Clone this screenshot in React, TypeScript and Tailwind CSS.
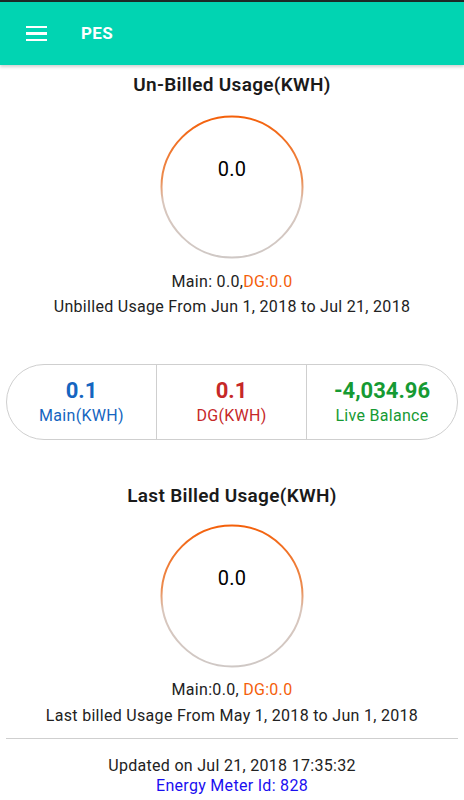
import { useId } from 'react';

const font = { fontFamily: 'Roboto, "Noto Sans", sans-serif' };

function Ring({ value }: { value: string }) {
  const id = useId().replace(/:/g, '');
  return (
    <div className="relative w-[144px] h-[144px] mx-auto">
      <svg width="144" height="144" viewBox="0 0 144 144" className="absolute inset-0">
        <defs>
          <linearGradient id={`g${id}`} x1="0" y1="0" x2="0" y2="1">
            <stop offset="0" stopColor="#f4600a" />
            <stop offset="0.45" stopColor="#ec8c50" />
            <stop offset="0.6" stopColor="#d9c6bc" />
            <stop offset="1" stopColor="#cfc8c5" />
          </linearGradient>
        </defs>
        <circle cx="72" cy="72" r="70.5" fill="none" stroke={`url(#g${id})`} strokeWidth="2" />
      </svg>
      <div className="relative pt-[42px] text-center text-[20px] leading-6 tracking-[0.3px] text-black">{value}</div>
    </div>
  );
}

export default function App() {
  return (
    <div className="w-[464px] h-[800px] bg-white overflow-hidden" style={font}>
      {/* App bar */}
      <div className="h-[2px] bg-[#1d2a27]" />
      <div className="h-[63px] bg-[#01d4b2] flex items-center shadow-[0_2px_3px_rgba(0,0,0,0.18)] relative">
        <div className="w-[21px] ml-[26px] flex flex-col gap-[4px]">
          <span className="h-[2.5px] bg-white block" />
          <span className="h-[2.5px] bg-white block" />
          <span className="h-[2.5px] bg-white block" />
        </div>
        <span className="ml-[34px] text-white text-[17px] font-bold tracking-[0.4px]">PES</span>
      </div>

      {/* Un-billed */}
      <div className="pt-[8px] text-center">
        <h2 className="text-[19px] leading-6 font-semibold tracking-[0.3px] text-[#1a1a1a]">Un-Billed Usage(KWH)</h2>
        <div className="mt-[18px]">
          <Ring value="0.0" />
        </div>
        <p className="mt-[13px] text-[16px] leading-5 tracking-[0.3px] text-[#222]">
          Main: 0.0,<span className="text-[#f4600a]">DG:0.0</span>
        </p>
        <p className="mt-[5px] text-[16px] leading-5 tracking-[0.3px] text-[#222]">Unbilled Usage From Jun 1, 2018 to Jul 21, 2018</p>
      </div>

      {/* Stats */}
      <div className="mx-[6px] mt-[47px] h-[76px] rounded-full border border-[#cfcfcf] grid grid-cols-3">
        <div className="flex flex-col items-center justify-center border-r border-[#cfcfcf]">
          <span className="text-[22px] leading-6 font-bold text-[#1565c0]">0.1</span>
          <span className="mt-[3px] text-[16px] leading-5 tracking-[0.3px] text-[#1565c0]">Main(KWH)</span>
        </div>
        <div className="flex flex-col items-center justify-center border-r border-[#cfcfcf]">
          <span className="text-[22px] leading-6 font-bold text-[#c62828]">0.1</span>
          <span className="mt-[3px] text-[16px] leading-5 tracking-[0.3px] text-[#c62828]">DG(KWH)</span>
        </div>
        <div className="flex flex-col items-center justify-center">
          <span className="text-[22px] leading-6 font-bold text-[#169a33]">-4,034.96</span>
          <span className="mt-[3px] text-[16px] leading-5 tracking-[0.3px] text-[#169a33]">Live Balance</span>
        </div>
      </div>

      {/* Last billed */}
      <div className="pt-[44px] text-center">
        <h2 className="text-[19px] leading-6 font-semibold tracking-[0.3px] text-[#1a1a1a]">Last Billed Usage(KWH)</h2>
        <div className="mt-[16px]">
          <Ring value="0.0" />
        </div>
        <p className="mt-[12px] text-[16px] leading-5 tracking-[0.3px] text-[#222]">
          Main:0.0, <span className="text-[#f4600a]">DG:0.0</span>
        </p>
        <p className="mt-[6px] text-[16px] leading-5 tracking-[0.3px] text-[#222]">Last billed Usage From May 1, 2018 to Jun 1, 2018</p>
      </div>

      <div className="mx-[6px] mt-[12px] h-px bg-[#cfcfcf]" />

      <div className="pt-[17px] text-center">
        <p className="text-[16px] leading-5 tracking-[0.3px] text-[#222]">Updated on Jul 21, 2018 17:35:32</p>
        <p className="text-[16px] leading-5 tracking-[0.3px] text-[#1a0ff0]">Energy Meter Id: 828</p>
      </div>
    </div>
  );
}
